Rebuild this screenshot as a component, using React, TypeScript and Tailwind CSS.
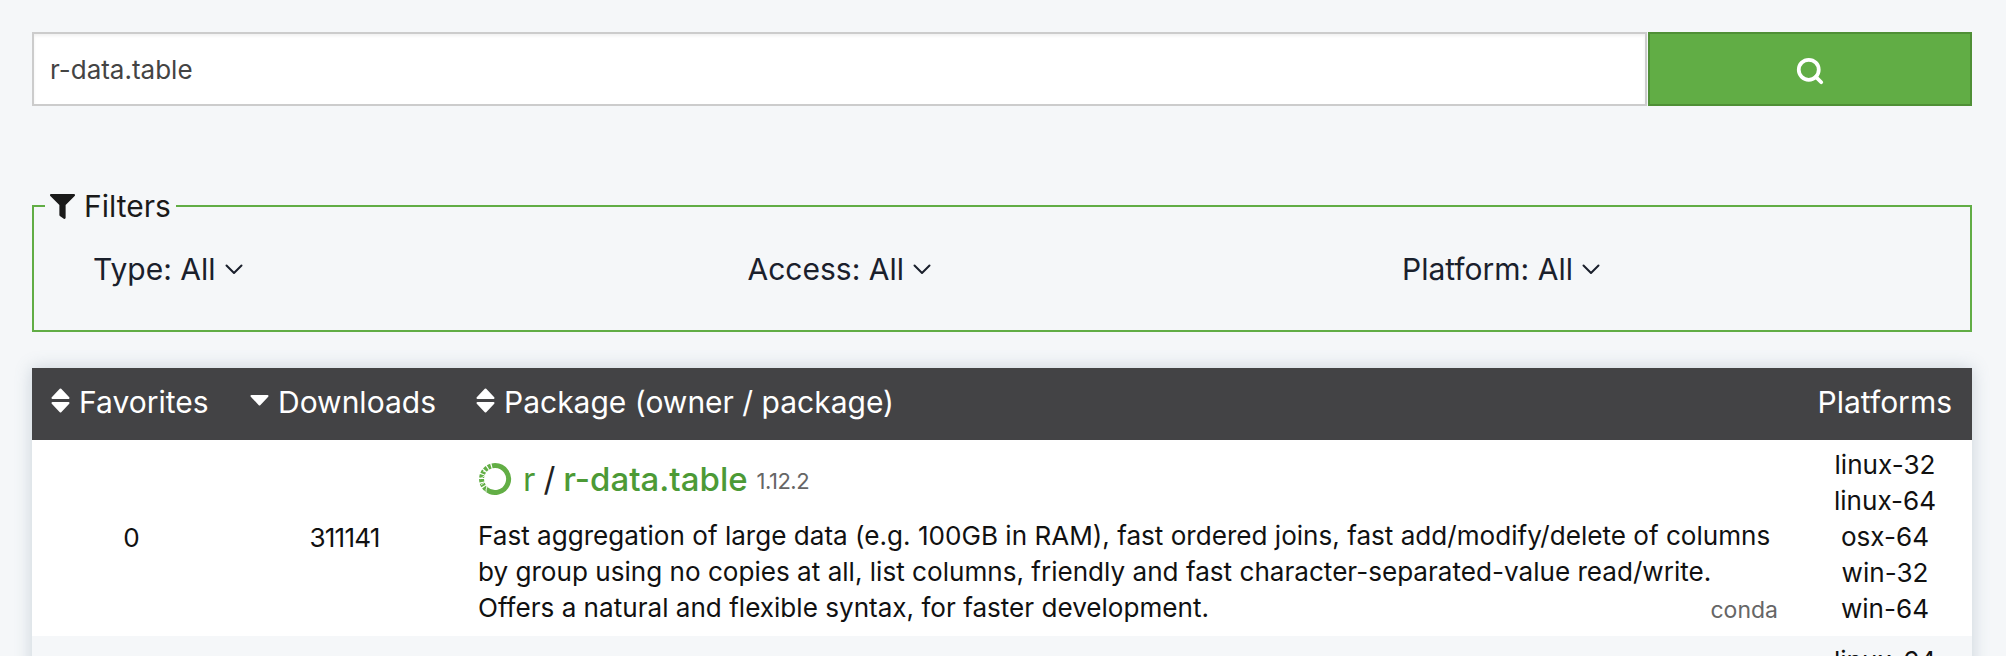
import { FaFilter } from "react-icons/fa"
import { Search } from "lucide-react"

const platforms = ["linux-32", "linux-64", "osx-64", "win-32", "win-64"]

function Chevron() {
  return (
    <svg width="18" height="11" viewBox="0 0 18 11" fill="none" className="ml-[9px] mt-[1px]">
      <path d="M1.5 1.5 9 9l7.5-7.5" stroke="currentColor" strokeWidth="2" strokeLinecap="round" strokeLinejoin="round" />
    </svg>
  )
}

function SortIcon({ down = false }: { down?: boolean }) {
  return (
    <svg width="19" height="25" viewBox="0 0 19 25" fill="currentColor" stroke="currentColor" strokeWidth="2" strokeLinejoin="round" className="mr-[9px] -mt-[4px] shrink-0">
      {!down && <path d="M9.5 1.5 17.5 10h-16z" />}
      <path d="M1.5 15h16l-8 8.5z" transform={down ? "translate(0 -7)" : undefined} />
    </svg>
  )
}

function CondaLogo() {
  return (
    <svg width="34" height="34" viewBox="0 0 34 34" fill="none" className="shrink-0">
      <path d="M17 3.5a13.5 13.5 0 1 1-9 23.5" stroke="#62ae45" strokeWidth="5" />
      <path d="M17 3.5A13.5 13.5 0 0 0 8 27" stroke="#62ae45" strokeWidth="5" strokeDasharray="3 1.2" />
      <path d="M5 9l8 3M2 17l7-5M3 23l7-5M8 30l1-9" stroke="#ffffff" strokeWidth="0.8" />
    </svg>
  )
}

function FilterItem({ label }: { label: string }) {
  return (
    <button className="flex w-[654.5px] shrink-0 items-center pl-[59px] text-[30px] leading-[36px] text-[#1a202c]">
      {label}
      <Chevron />
    </button>
  )
}

export default function App() {
  return (
    <div className="h-[656px] overflow-hidden bg-[#f5f7f9] pl-8 pr-[34px] pt-8 font-['Inter',sans-serif]">
      {/* SEARCH */}
      <div className="flex h-[74px]">
        <div className="flex flex-1 items-center border-2 border-[#cccccc] bg-white pl-[16px] text-[26px] text-[#444444] shadow-[inset_0_2px_3px_rgba(0,0,0,0.06)]">
          r-data.table
        </div>
        <button className="ml-px flex w-[324px] items-center justify-center border-2 border-[#4f8f36] bg-[#61ad45] pt-[3px] text-white">
          <Search size={30} strokeWidth={3} />
        </button>
      </div>

      {/* FILTERS */}
      <fieldset className="mt-[82px] h-[144px] min-w-0 overflow-hidden border-2 border-[#61ad45]">
        <legend className="ml-[11px] flex items-center px-[5px] text-[30px] leading-[36px] text-[#1a1a1a]">
          <FaFilter size={25} className="mr-[9px]" />
          Filters
        </legend>
        <div className="flex pt-[27px]">
          <FilterItem label="Type: All" />
          <FilterItem label="Access: All" />
          <FilterItem label="Platform: All" />
        </div>
      </fieldset>

      {/* TABLE */}
      <div className="mt-[36px] shadow-[0_0_16px_rgba(100,125,150,0.3)]">
        <table className="w-full table-fixed border-collapse text-[26.1px] leading-[36px] text-[#111111]">
          <thead>
            <tr className="h-[72px] bg-[#434345] text-left text-[30px] text-white">
              <th className="w-[199px] pb-[4px] pl-[19px] font-normal">
                <span className="flex items-center">
                  <SortIcon />
                  Favorites
                </span>
              </th>
              <th className="w-[227px] pb-[4px] pl-[19px] font-normal">
                <span className="flex items-center">
                  <SortIcon down />
                  Downloads
                </span>
              </th>
              <th className="pb-[4px] pl-[18px] font-normal">
                <span className="flex items-center">
                  <SortIcon />
                  Package (owner / package)
                </span>
              </th>
              <th className="w-[174px] pb-[4px] pr-[20px] text-right font-normal">Platforms</th>
            </tr>
          </thead>
          <tbody>
            <tr className="h-[196px] bg-white">
              <td className="text-center">0</td>
              <td className="text-center tracking-[-0.8px]">311141</td>
              <td className="px-[20px] align-top">
                <div className="mt-[16px] flex items-center text-[33px] leading-[42px]">
                  <CondaLogo />
                  <a className="ml-[11px] text-[#4c9a36]">r</a>
                  <span className="mx-[8px] text-[#222222]">/</span>
                  <a className="font-medium text-[#4c9a36]">r-data.table</a>
                  <span className="ml-[9px] mt-[4px] text-[22px] tracking-[-0.5px] text-[#666666]">1.12.2</span>
                </div>
                <p className="mt-[16px]">
                  Fast aggregation of large data (e.g. 100GB in RAM), fast ordered joins, fast add/modify/delete of columns by group using no copies at all, list columns, friendly and fast character-separated-value read/write. Offers a natural and flexible syntax, for faster development.
                </p>
                <div className="relative">
                  <span className="absolute bottom-[1px] right-0 text-[23px] leading-[30px] text-[#666666]">conda</span>
                </div>
              </td>
              <td className="text-center align-top">
                <div className="pt-[7px]">
                  {platforms.map((p) => (
                    <div key={p}>{p}</div>
                  ))}
                </div>
              </td>
            </tr>
            <tr className="bg-[#f5f7f9]">
              <td></td>
              <td></td>
              <td></td>
              <td className="text-center align-top">
                <div className="pt-[7px]">linux-64</div>
              </td>
            </tr>
          </tbody>
        </table>
      </div>
    </div>
  )
}
